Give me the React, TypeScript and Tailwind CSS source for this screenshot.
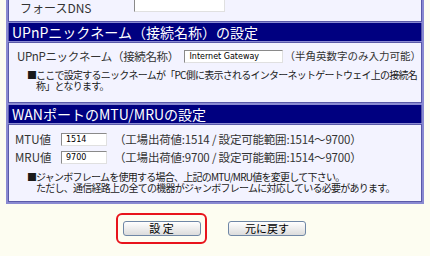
import React from "react";

const jp = "font-['Noto_Sans_CJK_JP','Noto_Sans',sans-serif]";

function Header({ children }: { children: React.ReactNode }) {
  return (
    <div className="flex h-[18px] items-center bg-[#000080] pl-[3px] text-[14px] leading-none text-white">
      {children}
    </div>
  );
}

function Box({ value, className }: { value?: string; className: string }) {
  return (
    <div
      className={`flex items-center border border-t-[#8a8a8a] border-l-[#8a8a8a] border-r-[#e0e0e0] border-b-[#e0e0e0] bg-white pl-[4px] text-[8px] leading-none text-black font-['DejaVu_Sans',sans-serif] ${className}`}
    >
      {value}
    </div>
  );
}

function Note({ lines }: { lines: string[] }) {
  return (
    <div className="flex text-[10px] leading-[11px] tracking-[-0.75px] text-[#1a1a1a]">
      <span className="w-[9px] shrink-0">■</span>
      <div className="flex flex-col whitespace-nowrap">
        {lines.map((l) => (
          <span key={l}>{l}</span>
        ))}
      </div>
    </div>
  );
}

export default function App() {
  return (
    <div className={`h-[256px] w-[430px] overflow-hidden bg-[#fdfdf1] ${jp}`}>
      <div className="ml-[6px] w-[418px] border-x-2 border-b-2 border-[#8a8ad2] bg-[#8a8ad2]">
        {/* row: force dns (cut off at top) */}
        <div className="flex h-[22px] items-start border-x border-b border-[#5a5aa8] bg-[#f3f3ff] pl-[11px] text-[12px] text-[#333]">
          <span className="mt-[1px] w-[114px] leading-[14px]">フォースDNS</span>
          <Box className="-mt-[8px] h-[20px] w-[91px]" />
        </div>

        <div className="mt-[1px] border-x border-[#5a5aa8]">
          <Header>UPnPニックネーム（接続名称）の設定</Header>
        </div>

        <div className="mt-[1px] flex h-[61px] flex-col border border-[#5a5aa8] bg-[#f3f3ff] pl-[8px] pt-[7px] text-[#333]">
          <div className="flex h-[13px] items-center text-[11.5px] leading-none">
            <span className="w-[171px] whitespace-nowrap tracking-[-0.35px]">UPnPニックネーム（接続名称）</span>
            <Box value="Internet Gateway" className="h-[13px] w-[100px]" />
            <span className="ml-[2px] whitespace-nowrap text-[10.5px]">（半角英数字のみ入力可能）</span>
          </div>
          <div className="ml-[10px] mt-[6px]">
            <Note
              lines={[
                "ここで設定するニックネームが「PC側に表示されるインターネットゲートウェイ上の接続名",
                "称」となります。",
              ]}
            />
          </div>
        </div>

        <div className="mt-[2px] border-x border-[#5a5aa8]">
          <Header>WANポートのMTU/MRUの設定</Header>
        </div>

        <div className="mt-[1px] flex h-[78px] flex-col border border-[#5a5aa8] bg-[#f3f3ff] pl-[6px] pt-[8px] text-[#333]">
          <div className="flex h-[13px] items-center text-[11.5px] leading-none">
            <span className="w-[46px]">MTU値</span>
            <Box value="1514" className="h-[13px] w-[46px]" />
            <span className="ml-[7px] whitespace-nowrap tracking-[-0.2px]">（工場出荷値:1514 / 設定可能範囲:1514〜9700）</span>
          </div>
          <div className="mt-[5px] flex h-[13px] items-center text-[11.5px] leading-none">
            <span className="w-[46px]">MRU値</span>
            <Box value="9700" className="h-[13px] w-[46px]" />
            <span className="ml-[7px] whitespace-nowrap tracking-[-0.2px]">（工場出荷値:9700 / 設定可能範囲:1514〜9700）</span>
          </div>
          <div className="ml-[12px] mt-[7px]">
            <Note
              lines={[
                "ジャンボフレームを使用する場合、上記のMTU/MRU値を変更して下さい。",
                "ただし、通信経路上の全ての機器がジャンボフレームに対応している必要があります。",
              ]}
            />
          </div>
        </div>
      </div>

      <div className="mt-[9px] flex items-center pl-[116px]">
        <div className="flex h-[31px] w-[91px] items-center justify-center rounded-[6px] border-2 border-[#e8141c]">
          <button className="flex h-[15px] w-[78px] items-center justify-center rounded-[3px] border border-[#6f87a6] bg-gradient-to-b from-[#ffffff] to-[#dcdcdc] text-[11px] leading-none text-black">
            設 定
          </button>
        </div>
        <button className="ml-[21px] flex h-[15px] w-[78px] items-center justify-center rounded-[3px] border border-[#6f87a6] bg-gradient-to-b from-[#ffffff] to-[#dcdcdc] text-[11px] leading-none text-black">
          元に戻す
        </button>
      </div>
    </div>
  );
}
